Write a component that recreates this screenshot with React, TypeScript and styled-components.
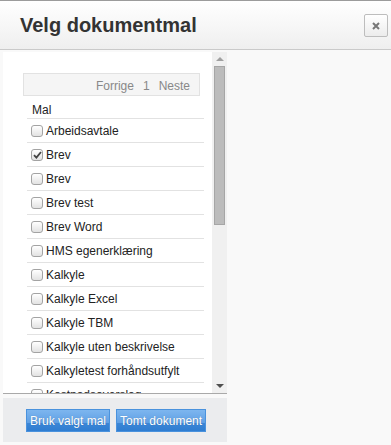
import React from 'react';
import styled, { createGlobalStyle } from 'styled-components';

const GlobalStyle = createGlobalStyle`
  html, body {
    margin: 0;
    padding: 0;
    background: #f9f9f9;
  }
  body {
    font-family: "Liberation Sans", Arial, sans-serif;
  }
`;

const Dialog = styled.div`
  width: 391px;
  height: 445px;
  background: #f9f9f9;
  border-top: 1px solid #9c9c9c;
  box-sizing: border-box;
  overflow: hidden;
`;

const Header = styled.div`
  height: 48px;
  display: flex;
  align-items: center;
  justify-content: space-between;
  padding: 0 3px 0 20px;
  background: linear-gradient(#ffffff, #efefef);
  border-bottom: 1px solid #cacaca;
`;

const Title = styled.h2`
  margin: 0;
  font-size: 20px;
  font-weight: bold;
  color: #333;
`;

const CloseButton = styled.button`
  width: 24px;
  height: 23px;
  margin-top: 1px;
  padding: 0;
  display: flex;
  align-items: center;
  justify-content: center;
  border: 1px solid #bdbdbd;
  border-radius: 2px;
  background: linear-gradient(#ffffff, #ececec);
  cursor: pointer;
`;

const Body = styled.div`
  padding: 2px 0 0 3px;
`;

const Column = styled.div`
  width: 224px;
  display: flex;
  flex-direction: column;
  gap: 4px;
`;

const Panel = styled.div`
  height: 341px;
  display: flex;
  border-bottom: 1px solid #a9a9a9;
`;

const ListArea = styled.div`
  flex: 1;
  overflow: hidden;
  background: #fff;
  padding: 21px 0 0 20px;
`;

const Scrollbar = styled.div`
  width: 15px;
  background: #f0f0f0;
  display: flex;
  flex-direction: column;
  align-items: center;
`;

const Arrow = styled.div<{ down?: boolean; dim?: boolean }>`
  width: 0;
  height: 0;
  margin: ${p => (p.down ? 'auto 0 5px' : '5px 0 5px')};
  border-left: 4px solid transparent;
  border-right: 4px solid transparent;
  ${p =>
    p.down
      ? `border-top: 4px solid ${p.dim ? '#a0a0a0' : '#4f4f4f'};`
      : `border-bottom: 4px solid ${p.dim ? '#a0a0a0' : '#4f4f4f'};`}
`;

const Thumb = styled.div`
  width: 11px;
  height: 159px;
  box-sizing: border-box;
  background: #bcbcbc;
  border: 1px solid #a6a6a6;
`;

const Pager = styled.div`
  width: 177px;
  height: 23px;
  box-sizing: border-box;
  display: flex;
  justify-content: flex-end;
  align-items: center;
  gap: 9px;
  padding: 3px 9px 0 0;
  background: #f5f5f5;
  border: 1px solid #e2e2e2;
  font-size: 12px;
  color: #888;
`;

const Table = styled.div`
  width: 177px;
  margin-left: 4px;
`;

const HeadRow = styled.div`
  height: 23px;
  box-sizing: border-box;
  padding: 7px 0 0 5px;
  border-bottom: 1px solid #e2e2e2;
  font-size: 12px;
  color: #222;
`;

const Row = styled.label`
  height: 24px;
  box-sizing: border-box;
  display: flex;
  align-items: center;
  padding: 1px 0 0 4px;
  border-bottom: 1px solid #e2e2e2;
  font-size: 12px;
  color: #222;
  white-space: nowrap;
`;

const Box = styled.span`
  width: 12px;
  height: 12px;
  box-sizing: border-box;
  margin-right: 3px;
  flex-shrink: 0;
  display: flex;
  align-items: center;
  justify-content: center;
  border: 1px solid #a3a3a3;
  border-radius: 3px;
  background: linear-gradient(#ffffff, #e2e2e2);
`;

const Footer = styled.div`
  height: 44px;
  display: flex;
  align-items: center;
  gap: 6px;
  padding: 1px 0 0 23px;
  box-sizing: border-box;
  background: #ebecee;
`;

const BlueButton = styled.button`
  height: 23px;
  padding: 0 3px;
  border: 1px solid #4a92dd;
  border-radius: 0;
  background: linear-gradient(#7db6ef 0%, #5f9fe4 62%, #3b86d6 64%, #2f7dd1 100%);
  color: #fff;
  font-family: "Liberation Sans", Arial, sans-serif;
  font-size: 12px;
  text-shadow: 0 0 1px rgba(0, 0, 0, 0.25);
  cursor: pointer;
`;

const templates = [
  'Arbeidsavtale',
  'Brev',
  'Brev',
  'Brev test',
  'Brev Word',
  'HMS egenerklæring',
  'Kalkyle',
  'Kalkyle Excel',
  'Kalkyle TBM',
  'Kalkyle uten beskrivelse',
  'Kalkyletest forhåndsutfylt',
  'Kostnadsoverslag',
];

const Check = () => (
  <svg width="9" height="8" viewBox="0 0 9 8">
    <path d="M1 4.2 L3.4 6.6 L8 1" fill="none" stroke="#444" strokeWidth="1.8" />
  </svg>
);

const App: React.FC = () => {
  const selected = 1;

  return (
    <Dialog>
      <GlobalStyle />
      <Header>
        <Title>Velg dokumentmal</Title>
        <CloseButton aria-label="Lukk">
          <svg width="8" height="8" viewBox="0 0 8 8">
            <path d="M1 1 L7 7 M7 1 L1 7" stroke="#777" strokeWidth="2" />
          </svg>
        </CloseButton>
      </Header>
      <Body>
        <Column>
          <Panel>
            <ListArea>
              <Pager>
                <span>Forrige</span>
                <span>1</span>
                <span>Neste</span>
              </Pager>
              <Table>
                <HeadRow>Mal</HeadRow>
                {templates.map((name, i) => (
                  <Row key={i}>
                    <Box>{i === selected && <Check />}</Box>
                    {name}
                  </Row>
                ))}
              </Table>
            </ListArea>
            <Scrollbar>
              <Arrow dim />
              <Thumb />
              <Arrow down />
            </Scrollbar>
          </Panel>
          <Footer>
            <BlueButton>Bruk valgt mal</BlueButton>
            <BlueButton>Tomt dokument</BlueButton>
          </Footer>
        </Column>
      </Body>
    </Dialog>
  );
};

export default App;
